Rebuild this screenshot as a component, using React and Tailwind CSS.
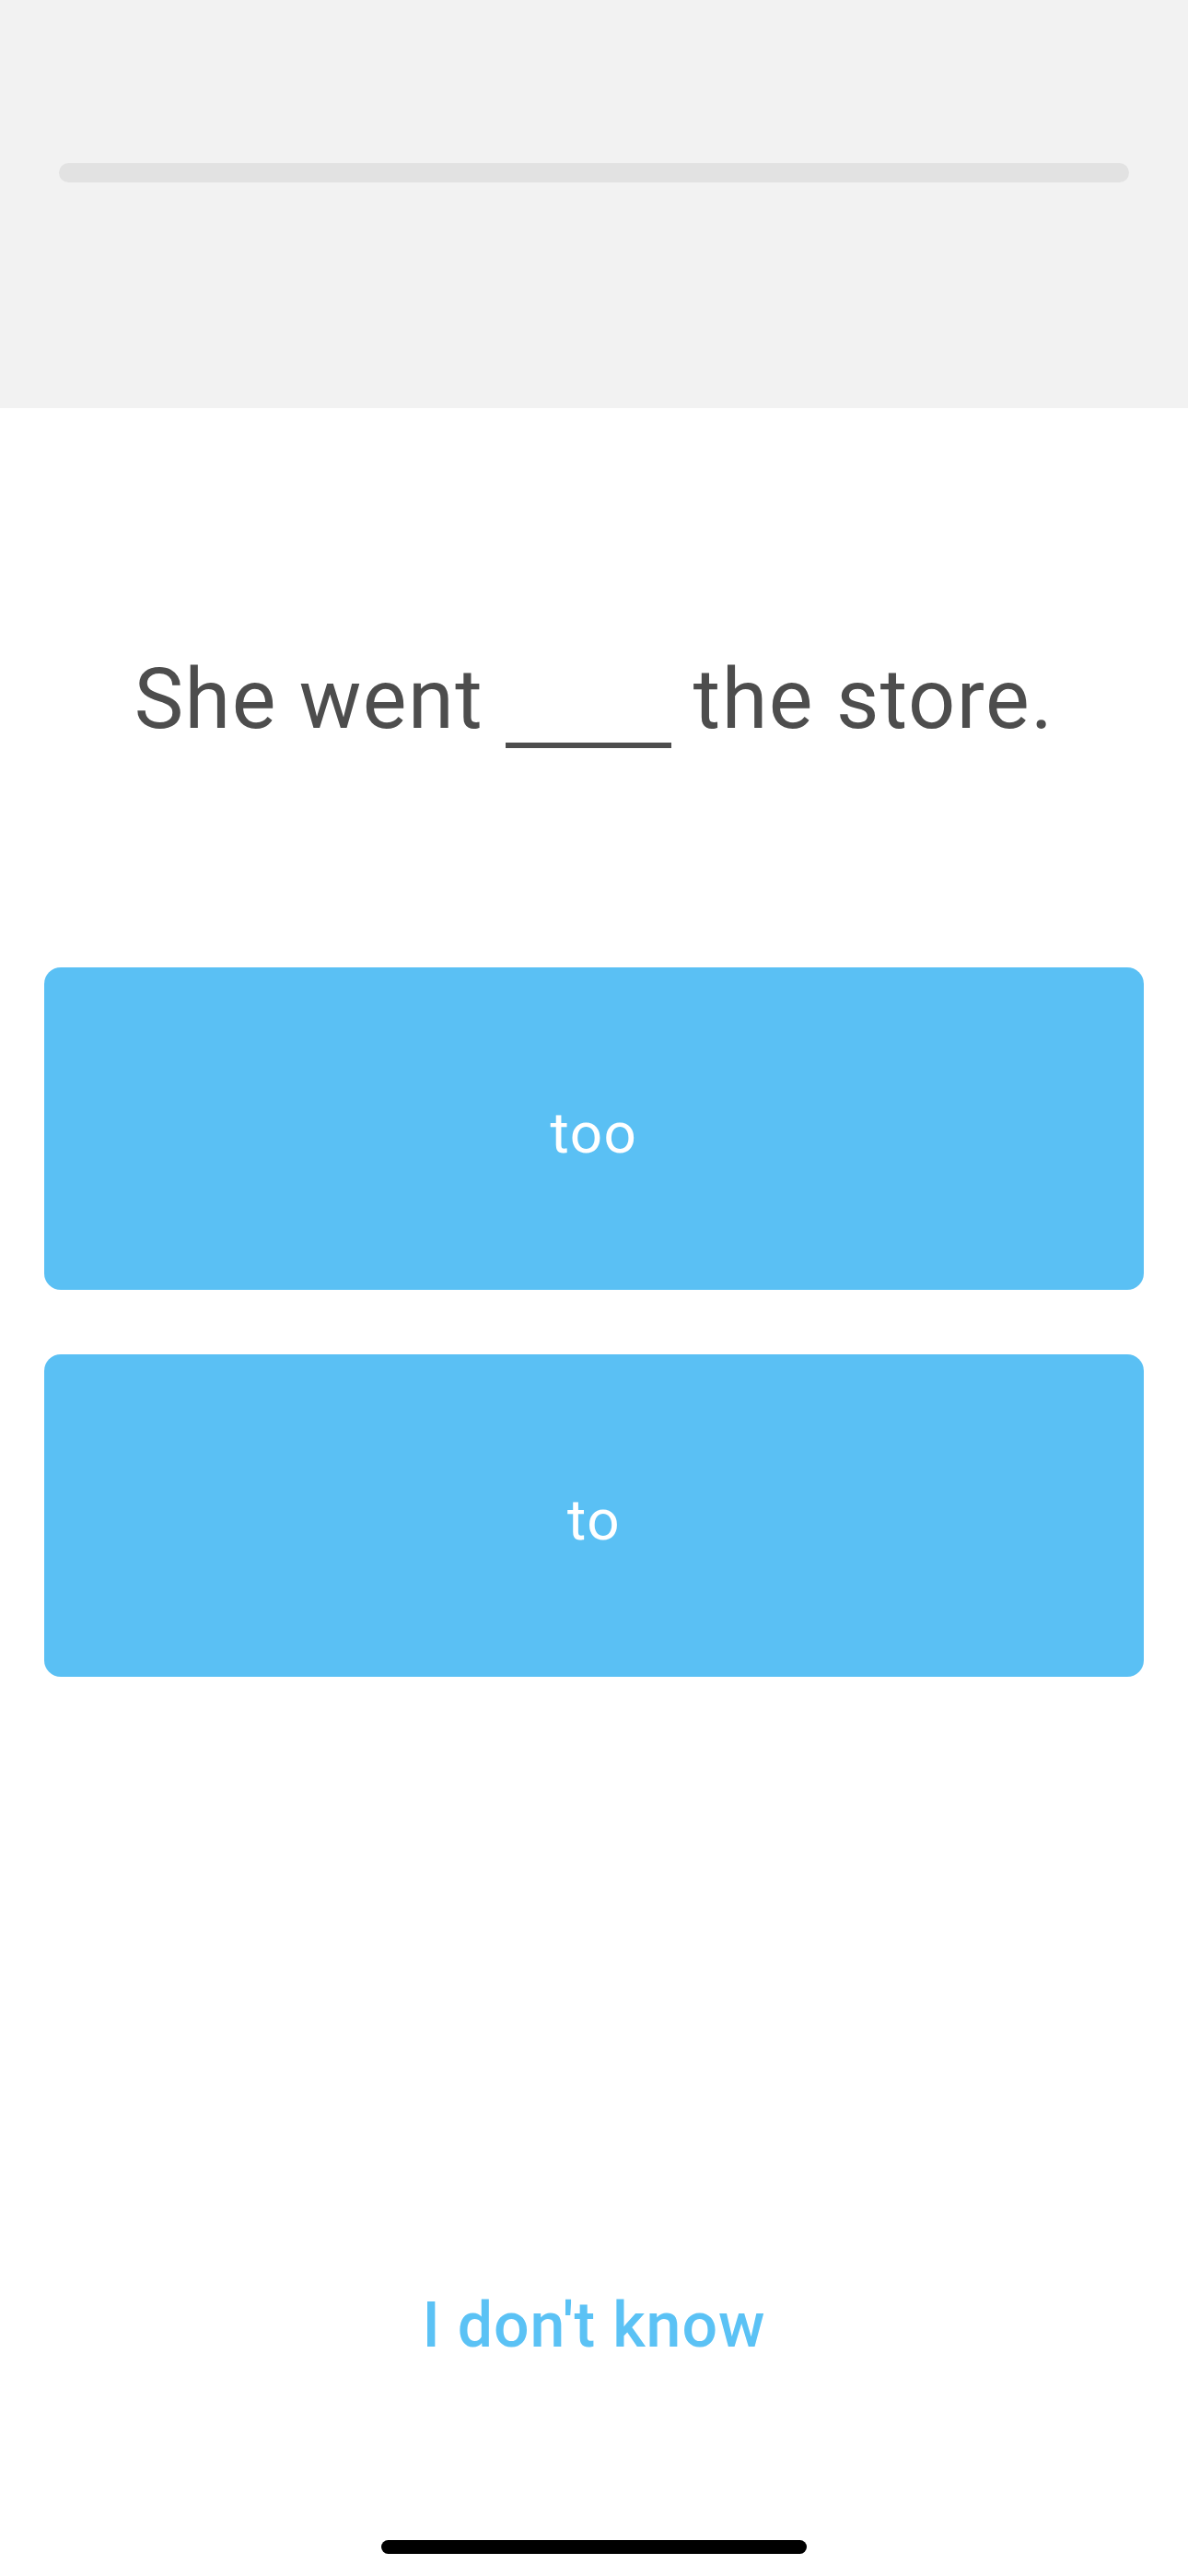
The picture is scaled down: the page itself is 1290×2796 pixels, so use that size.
export default function App() {
  return (
    <div
      className="w-[1290px] min-h-[2796px] bg-white flex flex-col"
      style={{ fontFamily: "Roboto, 'Noto Sans', sans-serif" }}
    >
      <header className="h-[443px] bg-[#f2f2f2] pt-[177px] px-[64px]">
        <div className="h-[21px] w-full rounded-full bg-[#e2e2e2]" />
      </header>

      <main className="flex flex-col items-center">
        <p className="mt-[272px] text-[90px] leading-[90px] text-[#4d4d4d] tracking-[1.5px] whitespace-nowrap">
          She went{" "}
          <span className="inline-block align-baseline w-[180px] h-[6px] bg-[#4d4d4d] mb-[-22px]" />{" "}
          the store.
        </p>

        <div className="mt-[245px] w-full px-[48px] flex flex-col gap-[70px]">
          <button className="h-[350px] w-full rounded-[18px] bg-[#5ac0f4] flex items-center justify-center pt-[10px] text-white text-[62px] leading-[62px] tracking-[1.5px]">
            too
          </button>
          <button className="h-[350px] w-full rounded-[18px] bg-[#5ac0f4] flex items-center justify-center pt-[10px] text-white text-[62px] leading-[62px] tracking-[1.5px]">
            to
          </button>
        </div>

        <button className="mt-[670px] text-[68px] leading-[68px] font-medium text-[#5bc2f5] tracking-[1px]">
          I don't know
        </button>

        <div className="mt-[199px] h-[15px] w-[462px] rounded-full bg-black" />
      </main>
    </div>
  );
}
